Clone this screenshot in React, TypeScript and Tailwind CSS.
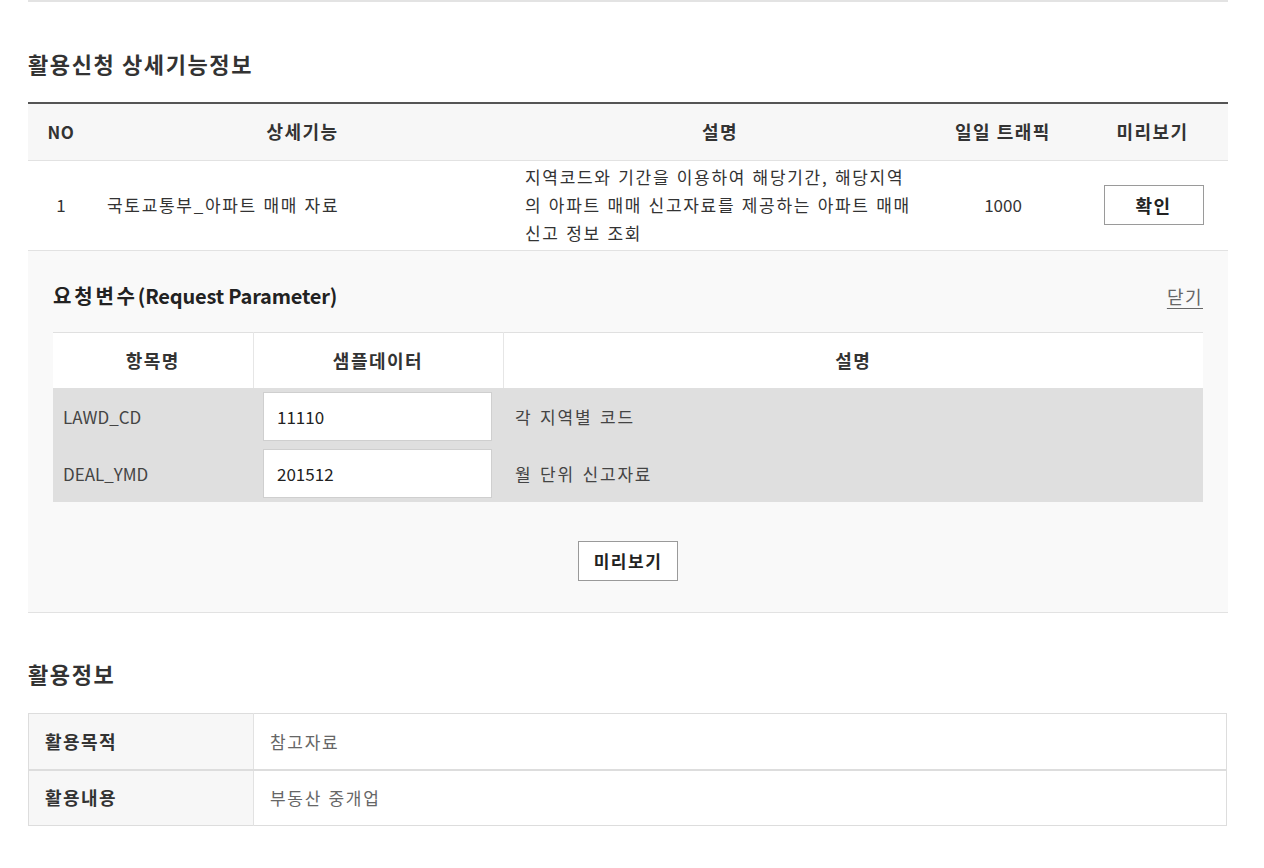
const font = { fontFamily: '"Noto Sans CJK KR", "Noto Sans", sans-serif' };

const params = [
  { name: "LAWD_CD", sample: "11110", desc: "각 지역별 코드" },
  { name: "DEAL_YMD", sample: "201512", desc: "월 단위 신고자료" },
];

export default function App() {
  return (
    <div className="min-h-screen bg-white text-[#333]" style={font}>
      <div className="ml-[28px] w-[1200px] border-t-2 border-[#e3e3e3]">
        {/* 상세기능정보 */}
        <h2 className="mt-[45px] text-[22px] font-bold leading-[32px] tracking-[1.6px] text-[#333]">활용신청 상세기능정보</h2>

        <table className="mt-[23px] w-full table-fixed border-collapse border-t-2 border-[#555] text-[17px]">
          <colgroup>
            <col className="w-[66px]" />
            <col className="w-[417px]" />
            <col className="w-[418px]" />
            <col className="w-[148px]" />
            <col className="w-[151px]" />
          </colgroup>
          <thead>
            <tr className="h-[57px] bg-[#f7f7f7] border-b border-[#e2e2e2] font-bold text-[18px] text-[#333]">
              <th className="text-center text-[17px] tracking-[0.5px]">NO</th>
              <th className="text-center tracking-[1.5px]">상세기능</th>
              <th className="text-center tracking-[1.5px]">설명</th>
              <th className="text-center tracking-[1.5px]">일일 트래픽</th>
              <th className="text-center tracking-[1.5px]">미리보기</th>
            </tr>
          </thead>
          <tbody>
            <tr className="h-[90px] border-b border-[#e2e2e2]">
              <td className="text-center">1</td>
              <td className="pl-[13px] tracking-[1.7px] [word-spacing:1px] whitespace-nowrap">국토교통부_아파트 매매 자료</td>
              <td className="pl-[14px] leading-[28px] tracking-[1.7px] [word-spacing:1px] whitespace-nowrap">
                <span className="block">지역코드와 기간을 이용하여 해당기간, 해당지역</span>
                <span className="block">의 아파트 매매 신고자료를 제공하는 아파트 매매</span>
                <span className="block">신고 정보 조회</span>
              </td>
              <td className="text-center">1000</td>
              <td>
                <div className="flex justify-center pl-[2px]">
                  <button className="h-[40px] w-[100px] border border-[#9a9a9a] bg-white text-[18px] font-bold tracking-[1.5px] text-[#222]">확인</button>
                </div>
              </td>
            </tr>
          </tbody>
        </table>

        {/* 요청변수 패널 */}
        <div className="bg-[#f9f9f9] border-b border-[#e2e2e2] px-[25px] pb-[31px]">
          <div className="flex items-center justify-between h-[81px] pt-[10px]">
            <h3 className="text-[20px] font-bold text-[#222]">
              <span className="tracking-[2.8px]">요청변수</span>
              <span className="tracking-[-0.2px]">(Request Parameter)</span>
            </h3>
            <a className="text-[18px] tracking-[1.5px] text-[#666] underline underline-offset-4 cursor-pointer">닫기</a>
          </div>
          <table className="w-full table-fixed border-collapse border-t border-[#e0e0e0] text-[17px]">
            <colgroup>
              <col className="w-[200px]" />
              <col className="w-[250px]" />
              <col />
            </colgroup>
            <thead>
              <tr className="h-[56px] bg-white font-bold text-[18px]">
                <th className="border-r border-[#e6e6e6] text-center tracking-[1.5px]">항목명</th>
                <th className="border-r border-[#e6e6e6] text-center tracking-[1.5px]">샘플데이터</th>
                <th className="text-center tracking-[1.5px]">설명</th>
              </tr>
            </thead>
            <tbody className="bg-[#dfdfdf]">
              {params.map((p) => (
                <tr key={p.name} className="h-[57px]">
                  <td className="pl-[10px] text-[#444]">{p.name}</td>
                  <td className="px-[10px]">
                    <input
                      defaultValue={p.sample}
                      className="h-[49px] w-[229px] border border-[#cfcfcf] bg-white px-[13px] text-[17px] text-[#222] outline-none"
                    />
                  </td>
                  <td className="pl-[12px] tracking-[1.8px] [word-spacing:2px] text-[#444]">{p.desc}</td>
                </tr>
              ))}
            </tbody>
          </table>
          <div className="mt-[39px] flex justify-center">
            <button className="h-[40px] w-[100px] border border-[#9a9a9a] bg-white font-bold text-[17px] tracking-[1.5px] text-[#222]">미리보기</button>
          </div>
        </div>

        {/* 활용정보 */}
        <h2 className="mt-[44px] text-[22px] font-bold leading-[32px] tracking-[1.6px] text-[#333]">활용정보</h2>
        <table className="mt-[24px] w-[1199px] table-fixed border-collapse border border-[#ddd] text-[17px]">
          <colgroup>
            <col className="w-[225px]" />
            <col />
          </colgroup>
          <tbody>
            <tr className="h-[56px] border-b-2 border-[#ddd]">
              <th className="bg-[#f7f7f7] border-r border-[#e2e2e2] pl-[16px] text-left text-[18px] font-bold tracking-[1.4px]">활용목적</th>
              <td className="pl-[16px] tracking-[1.7px] text-[#666]">참고자료</td>
            </tr>
            <tr className="h-[56px]">
              <th className="bg-[#f7f7f7] border-r border-[#e2e2e2] pl-[16px] text-left text-[18px] font-bold tracking-[1.4px]">활용내용</th>
              <td className="pl-[16px] tracking-[1.7px] [word-spacing:1px] text-[#666]">부동산 중개업</td>
            </tr>
          </tbody>
        </table>
      </div>
    </div>
  );
}
